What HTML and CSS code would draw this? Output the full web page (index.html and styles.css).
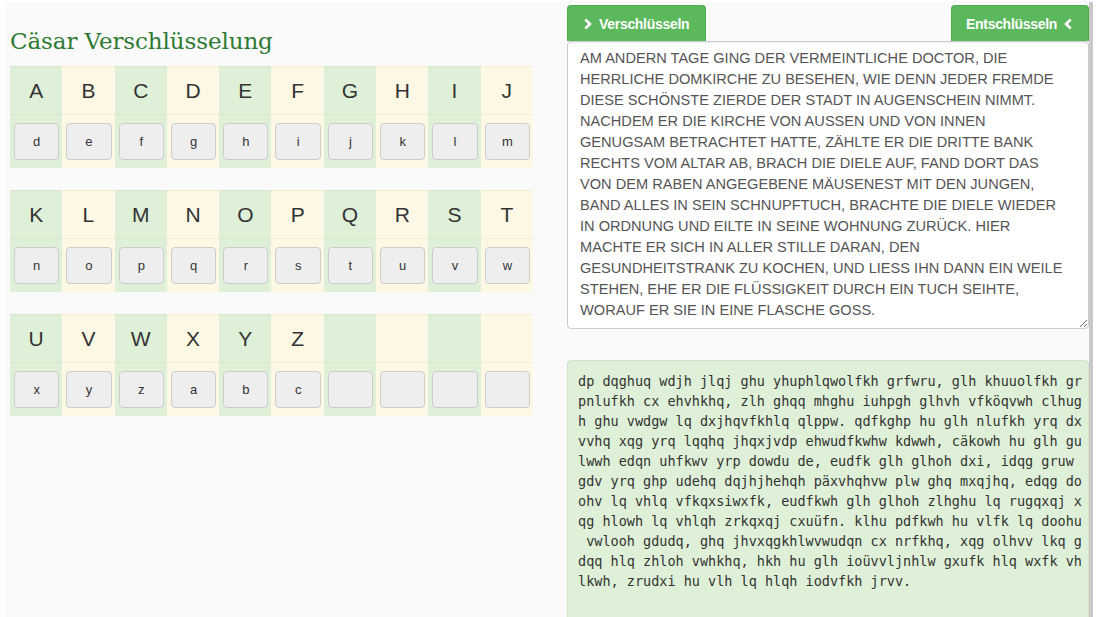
FILE: index.html
```html
<!DOCTYPE html>
<html lang="de">
<head>
<meta charset="utf-8">
<title>Cäsar Verschlüsselung</title>
<link rel="stylesheet" href="styles.css">
</head>
<body>
<div class="page">
  <section class="left">
    <h1 class="title">Cäsar Verschlüsselung</h1>
    <table class="alpha">
      <tr class="plain"><td>A</td><td>B</td><td>C</td><td>D</td><td>E</td><td>F</td><td>G</td><td>H</td><td>I</td><td>J</td></tr>
      <tr class="keys"><td><button class="key">d</button></td><td><button class="key">e</button></td><td><button class="key">f</button></td><td><button class="key">g</button></td><td><button class="key">h</button></td><td><button class="key">i</button></td><td><button class="key">j</button></td><td><button class="key">k</button></td><td><button class="key">l</button></td><td><button class="key">m</button></td></tr>
    </table>
    <table class="alpha">
      <tr class="plain"><td>K</td><td>L</td><td>M</td><td>N</td><td>O</td><td>P</td><td>Q</td><td>R</td><td>S</td><td>T</td></tr>
      <tr class="keys"><td><button class="key">n</button></td><td><button class="key">o</button></td><td><button class="key">p</button></td><td><button class="key">q</button></td><td><button class="key">r</button></td><td><button class="key">s</button></td><td><button class="key">t</button></td><td><button class="key">u</button></td><td><button class="key">v</button></td><td><button class="key">w</button></td></tr>
    </table>
    <table class="alpha">
      <tr class="plain"><td>U</td><td>V</td><td>W</td><td>X</td><td>Y</td><td>Z</td><td></td><td></td><td></td><td></td></tr>
      <tr class="keys"><td><button class="key">x</button></td><td><button class="key">y</button></td><td><button class="key">z</button></td><td><button class="key">a</button></td><td><button class="key">b</button></td><td><button class="key">c</button></td><td><button class="key"></button></td><td><button class="key"></button></td><td><button class="key"></button></td><td><button class="key"></button></td></tr>
    </table>
  </section>
  <section class="right">
    <div class="actions">
      <button class="btn-go"><svg class="chev" viewBox="0 0 10 12" width="10" height="12"><path d="M2.2 0.6 L7.8 6 L2.2 11.4 L0.4 9.6 L4.1 6 L0.4 2.4 Z" fill="#fff"/></svg>Verschlüsseln</button>
      <button class="btn-go">Entschlüsseln<svg class="chev" viewBox="0 0 10 12" width="10" height="12"><path d="M7.8 0.6 L2.2 6 L7.8 11.4 L9.6 9.6 L5.9 6 L9.6 2.4 Z" fill="#fff"/></svg></button>
    </div>
    <textarea class="plaintext">AM ANDERN TAGE GING DER VERMEINTLICHE DOCTOR, DIE
HERRLICHE DOMKIRCHE ZU BESEHEN, WIE DENN JEDER FREMDE
DIESE SCHÖNSTE ZIERDE DER STADT IN AUGENSCHEIN NIMMT.
NACHDEM ER DIE KIRCHE VON AUSSEN UND VON INNEN
GENUGSAM BETRACHTET HATTE, ZÄHLTE ER DIE DRITTE BANK
RECHTS VOM ALTAR AB, BRACH DIE DIELE AUF, FAND DORT DAS
VON DEM RABEN ANGEGEBENE MÄUSENEST MIT DEN JUNGEN,
BAND ALLES IN SEIN SCHNUPFTUCH, BRACHTE DIE DIELE WIEDER
IN ORDNUNG UND EILTE IN SEINE WOHNUNG ZURÜCK. HIER
MACHTE ER SICH IN ALLER STILLE DARAN, DEN
GESUNDHEITSTRANK ZU KOCHEN, UND LIESS IHN DANN EIN WEILE
STEHEN, EHE ER DIE FLÜSSIGKEIT DURCH EIN TUCH SEIHTE,
WORAUF ER SIE IN EINE FLASCHE GOSS.</textarea>
    <pre class="cipher">dp dqghuq wdjh jlqj ghu yhuphlqwolfkh grfwru, glh khuuolfkh gr
pnlufkh cx ehvhkhq, zlh ghqq mhghu iuhpgh glhvh vfköqvwh clhug
h ghu vwdgw lq dxjhqvfkhlq qlppw. qdfkghp hu glh nlufkh yrq dx
vvhq xqg yrq lqqhq jhqxjvdp ehwudfkwhw kdwwh, cäkowh hu glh gu
lwwh edqn uhfkwv yrp dowdu de, eudfk glh glhoh dxi, idqg gruw 
gdv yrq ghp udehq dqjhjhehqh päxvhqhvw plw ghq mxqjhq, edqg do
ohv lq vhlq vfkqxsiwxfk, eudfkwh glh glhoh zlhghu lq rugqxqj x
qg hlowh lq vhlqh zrkqxqj cxuüfn. klhu pdfkwh hu vlfk lq doohu
 vwlooh gdudq, ghq jhvxqgkhlwvwudqn cx nrfkhq, xqg olhvv lkq g
dqq hlq zhloh vwhkhq, hkh hu glh ioüvvljnhlw gxufk hlq wxfk vh
lkwh, zrudxi hu vlh lq hlqh iodvfkh jrvv.</pre>
  </section>
</div>
</body>
</html>
```
FILE: styles.css
```css
html, body {
  margin: 0;
  padding: 0;
  background: #ffffff;
  overflow: hidden;
}

.page {
  margin: 2px 0 0 5px;
  width: 1079px;
  height: 615px;
  padding-left: 5px;
  background: #fafafa;
  border-right: 4px solid #c9c9c9;
  display: grid;
  grid-template-columns: 523px 522px;
  column-gap: 34px;
  overflow: hidden;
  font-family: "Liberation Sans", Arial, sans-serif;
  color: #333;
}

.title {
  margin: 0 0 10px 0;
  padding-top: 24px;
  font-family: "DejaVu Serif", serif;
  font-weight: normal;
  font-size: 23px;
  line-height: 30px;
  color: #2f7a33;
  letter-spacing: -0.1px;
}

.alpha {
  width: 523px;
  table-layout: fixed;
  border-collapse: separate;
  border-spacing: 0;
  margin-bottom: 22px;
}

.alpha td {
  padding: 0 4px;
  text-align: center;
  border-top: 1px solid rgba(160, 140, 60, 0.09);
}

.alpha td:nth-child(odd) { background: #dff0d8; }
.alpha td:nth-child(even) { background: #fcf8e3; }

.plain td {
  height: 47px;
  font-size: 21px;
  line-height: 24px;
  color: #333;
}

.keys td {
  padding: 8px 3px 8px 4px;
}

.key {
  display: block;
  width: 100%;
  height: 37px;
  margin: 0;
  padding: 0;
  background: #eeeeee;
  border: 1px solid #cccccc;
  border-radius: 4px;
  font-family: "Liberation Sans", Arial, sans-serif;
  font-size: 13px;
  color: #333;
}

.right {
  padding-top: 3px;
  display: flex;
  flex-direction: column;
}

.actions {
  display: flex;
  justify-content: space-between;
  height: 36px;
}

.btn-go {
  display: flex;
  align-items: center;
  gap: 5px;
  height: 36px;
  margin: 0;
  padding: 0 14px 0 16px;
  background: #5cb85c;
  border: 1px solid #4cae4c;
  border-bottom: none;
  border-radius: 4px 4px 0 0;
  color: #fff;
  font-family: "Liberation Sans", Arial, sans-serif;
  font-weight: bold;
  font-size: 14px;
  letter-spacing: -0.3px;
}

.btn-go:first-child { width: 139px; }
.btn-go:last-child { width: 138px; padding: 0 14px 0 14px; }

.chev { display: block; flex: none; }

.plaintext {
  display: block;
  box-sizing: border-box;
  width: 522px;
  height: 288px;
  margin: 0;
  padding: 6px 12px;
  border: 1px solid #cccccc;
  border-radius: 4px;
  background: #fff;
  box-shadow: inset 0 1px 1px rgba(0, 0, 0, 0.075);
  font-family: "Liberation Sans", Arial, sans-serif;
  font-size: 14.6px;
  line-height: 21px;
  color: #555;
}

.cipher {
  box-sizing: border-box;
  margin: 31px 0 0 0;
  min-height: 320px;
  padding: 10px 10px;
  background: #dff0d8;
  border: 1px solid #d0e4c6;
  border-radius: 4px;
  font-family: "DejaVu Sans Mono", monospace;
  font-size: 13.5px;
  line-height: 20px;
  color: #333;
  white-space: pre;
  overflow: hidden;
}
```
